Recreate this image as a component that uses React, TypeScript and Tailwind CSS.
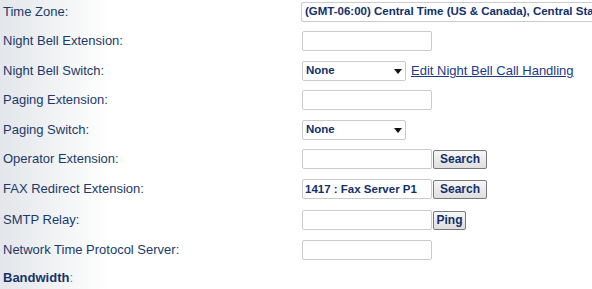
import React from "react";

const labelCls = "w-[302px] shrink-0 pl-[3px] text-[13px] text-[#1b3a6b]";
const inputCls =
  "h-[20px] w-[130px] rounded-[2px] border border-[#c9cbcf] bg-white px-[2px] text-[11.5px] font-bold text-[#12306a] outline-none";

function Arrow() {
  return (
    <svg width="8" height="5" viewBox="0 0 8 5" className="shrink-0">
      <path d="M0 0 H8 L4 5 Z" fill="#111" />
    </svg>
  );
}

function FakeSelect({ value }: { value: string }) {
  return (
    <div className="flex h-[20px] w-[104px] items-center justify-between rounded-[2px] border border-[#c9cbcf] bg-white pl-[3px] pr-[3px] text-[11.5px] font-bold text-[#12306a]">
      <span>{value}</span>
      <Arrow />
    </div>
  );
}

function Btn({ children, w }: { children: React.ReactNode; w: string }) {
  return (
    <button
      className={`ml-[1px] h-[19px] ${w} rounded-[2px] border border-[#76787c] bg-[linear-gradient(to_bottom,#f7f7f7,#dedede)] text-[12px] font-bold leading-none text-[#12306a]`}
    >
      {children}
    </button>
  );
}

function Row({
  label,
  children,
  mt,
}: {
  label: React.ReactNode;
  children?: React.ReactNode;
  mt: string;
}) {
  return (
    <div className={`flex h-[22px] items-center ${mt}`}>
      <div className={labelCls}>{label}</div>
      <div className="flex items-center">{children}</div>
    </div>
  );
}

export default function App() {
  return (
    <div
      className="h-[289px] w-[592px] overflow-hidden bg-[linear-gradient(to_right,#e3e6ea,#ffffff_110px)]"
      style={{ fontFamily: '"Liberation Sans", Arial, sans-serif' }}
    >
      <div className="flex flex-col">
        <Row label="Time Zone:" mt="mt-[1px]">
          <div className="-ml-[1px] flex h-[20px] w-[420px] items-center whitespace-nowrap rounded-[2px] border border-[#c9cbcf] bg-white pl-[3px] text-[11.5px] font-bold text-[#12306a]">
            (GMT-06:00) Central Time (US &amp; Canada), Central Standard Time
          </div>
        </Row>
        <Row label="Night Bell Extension:" mt="mt-[7px]">
          <input className={inputCls} defaultValue="" />
        </Row>
        <Row label="Night Bell Switch:" mt="mt-[8px]">
          <FakeSelect value="None" />
          <a href="#" className="ml-[5px] text-[13px] text-[#1b3a8c] underline">
            Edit Night Bell Call Handling
          </a>
        </Row>
        <Row label="Paging Extension:" mt="mt-[7px]">
          <input className={inputCls} defaultValue="" />
        </Row>
        <Row label="Paging Switch:" mt="mt-[8px]">
          <FakeSelect value="None" />
        </Row>
        <Row label="Operator Extension:" mt="mt-[7px]">
          <input className={inputCls} defaultValue="" />
          <Btn w="w-[54px]">Search</Btn>
        </Row>
        <Row label="FAX Redirect Extension:" mt="mt-[8px]">
          <input className={inputCls} defaultValue="1417 : Fax Server P1" />
          <Btn w="w-[54px]">Search</Btn>
        </Row>
        <Row label="SMTP Relay:" mt="mt-[9px]">
          <input className={inputCls} defaultValue="" />
          <Btn w="w-[33px]">Ping</Btn>
        </Row>
        <Row label="Network Time Protocol Server:" mt="mt-[8px]">
          <input className={inputCls} defaultValue="" />
        </Row>
        <Row
          label={
            <span>
              <span className="font-bold text-[#163468]">Bandwidth</span>
              <span className="text-[#5a82b8]">:</span>
            </span>
          }
          mt="mt-[6px]"
        />
      </div>
    </div>
  );
}
